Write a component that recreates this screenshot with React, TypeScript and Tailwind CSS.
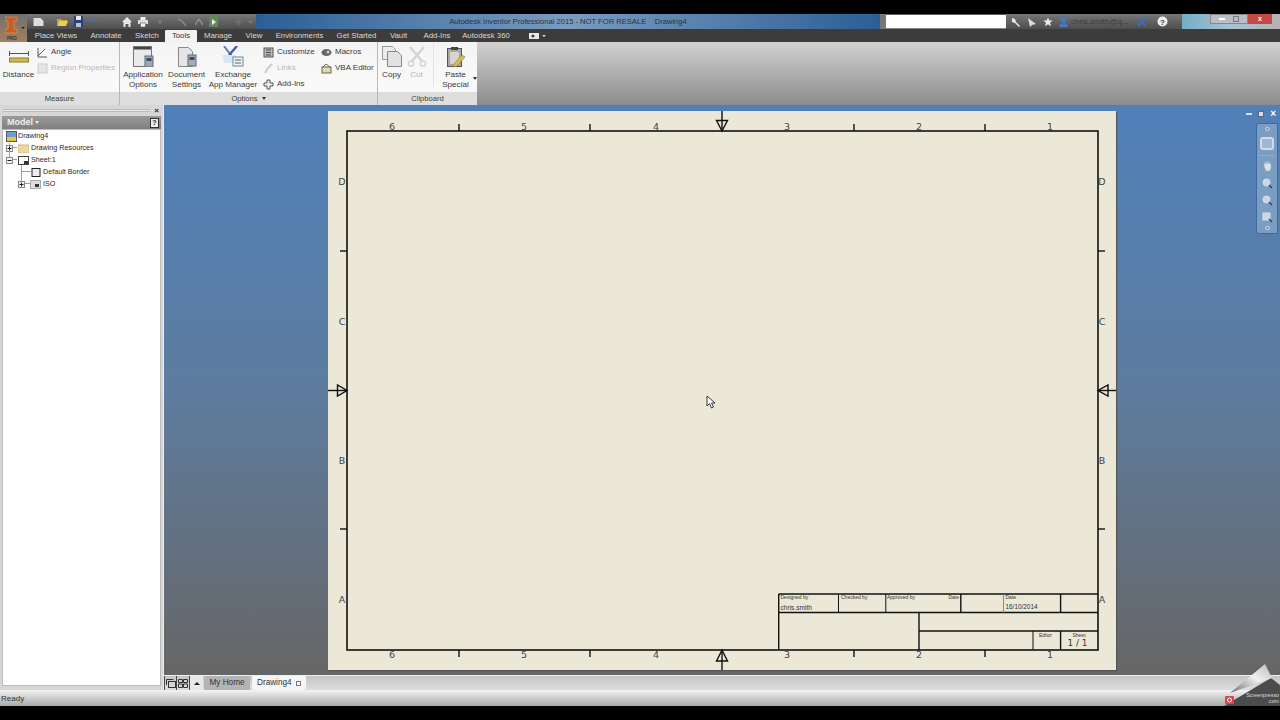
import React from "react";

const Ico = ({ w, h, children, className = "" }: { w: number; h: number; children: React.ReactNode; className?: string }) => (
  <svg width={w} height={h} viewBox={`0 0 ${w} ${h}`} className={`shrink-0 ${className}`}>{children}</svg>
);

const AppIcon = () => (
  <Ico w={22} h={21}>
    <rect x="1.500" y=".5" width="18" height="20" fill="#e9e9e9" stroke="#777" />
    <rect x="2" y="1" width="17" height="2.500" fill="#444" />
    <rect x="13" y="10" width="8" height="11" fill="#9fa9b2" stroke="#667" />
    <rect x="14.500" y="12" width="5" height="3" fill="#34506e" />
  </Ico>
);
const DocIcon = () => (
  <Ico w={20} h={21}>
    <path d="M1.500 1.500h10l4 4v15h-14z" fill="#e5e5e5" stroke="#888" />
    <rect x="11" y="9" width="8" height="11" fill="#a5adb5" stroke="#667" />
    <rect x="12.500" y="11" width="5" height="3" fill="#34506e" />
  </Ico>
);
const ExchangeIcon = () => (
  <Ico w={22} h={21}>
    <path d="M2 0l6 8-5 8" stroke="#5a7fc0" strokeWidth="2" fill="none" />
    <path d="M15 0L8 8l6 8" stroke="#3f5fa5" strokeWidth="2.400" fill="none" />
    <path d="M0 9h13l4 8H2z" fill="#dbe6f2" />
    <rect x="11" y="11" width="10" height="9" fill="#eef2f5" stroke="#6a8a9a" />
    <path d="M13 14h6M13 17h6" stroke="#567" />
  </Ico>
);
const CopyIcon = () => (
  <Ico w={21} h={21}>
    <path d="M1.500 .5h10l3 3v10h-13z" fill="#ececec" stroke="#999" />
    <path d="M6.500 5.500h10l4 4v11h-14z" fill="#e2e2e2" stroke="#888" />
  </Ico>
);
const CutIcon = () => (
  <Ico w={20} h={21}>
    <path d="M3 1l12 14M17 1L5 15" stroke="#d4d4d4" strokeWidth="2.400" />
    <circle cx="4" cy="17.500" r="2.600" fill="none" stroke="#d4d4d4" strokeWidth="1.500" />
    <circle cx="16" cy="17.500" r="2.600" fill="none" stroke="#d4d4d4" strokeWidth="1.500" />
  </Ico>
);
const PasteIcon = () => (
  <Ico w={21} h={22}>
    <rect x="2.500" y="2.500" width="14" height="18" fill="#a8a8a0" stroke="#555" />
    <rect x="6" y="1" width="7" height="3" fill="#444" />
    <rect x="5" y="6" width="9" height="12" fill="#d5d5ce" />
    <path d="M9 18l8-9 3 2-8 9-4 1z" fill="#d8bd55" stroke="#8a7326" strokeWidth=".6" />
  </Ico>
);
const LargeBtn = ({ w, icon, lines, dim }: { w: number; icon: React.ReactNode; lines: string[]; dim?: boolean }) => (
  <div className="flex flex-col items-center shrink-0" style={{ width: w }}>
    <div className="h-[27px] flex items-start justify-center pt-[3px]">{icon}</div>
    <div className={`leading-[10px] text-center whitespace-nowrap text-[8.1px] ${dim ? "text-[#b5b5b5]" : "text-[#3a3a3a]"}`}>
      {lines.map((l) => <div key={l}>{l}</div>)}
    </div>
  </div>
);
const SmallBtn = ({ icon, label, dim }: { icon: React.ReactNode; label: string; dim?: boolean }) => (
  <div className={`flex items-center h-[16px] gap-[3px] whitespace-nowrap ${dim ? "text-[#b8b8b8]" : "text-[#3a3a3a]"}`}>
    {icon}<span>{label}</span>
  </div>
);
const Panel = ({ w, label, caret, children, last }: { w: number; label: string; caret?: boolean; children: React.ReactNode; last?: boolean }) => (
  <div className={`flex flex-col shrink-0 ${last ? "" : "border-r border-[#b9b9b9]"}`} style={{ width: w }}>
    <div className="h-[50px] flex bg-gradient-to-b from-[#f4f4f4] to-[#fafafa] pt-[1px]">{children}</div>
    <div className="h-[13px] flex items-center justify-center gap-[4px] bg-[#dedede] text-[#3f3f3f]">
      <span>{label}</span>
      {caret && <span className="w-0 h-0 border-x-[2.5px] border-x-transparent border-t-[3px] border-t-[#333]" />}
    </div>
  </div>
);

const tabs: [string, number][] = [["Place Views", 54], ["Annotate", 46], ["Sketch", 36], ["Tools", 32], ["Manage", 42], ["View", 30], ["Environments", 61], ["Get Started", 53], ["Vault", 31], ["Add-Ins", 46], ["Autodesk 360", 52]];

const qat = (
  <div className="flex items-center ml-[6px]">
    <Ico w={11} h={9}><path d="M.5 1h7l3 3v5h-10z" fill="#dedede" /></Ico>
    <div className="w-[13px]" />
    <Ico w={11} h={9}><path d="M0 2h4l1 1h5v1H3L1 9H0z" fill="#c9a52c" /><path d="M2 4h9L9 9H1z" fill="#e9cf58" /></Ico>
    <div className="w-[6px]" />
    <Ico w={9} h={11}><rect width="9" height="11" fill="#2c3f7e" /><rect x="2" y="0" width="5" height="4" fill="#e8e8e8" /><rect x="2" y="7" width="5" height="4" fill="#b8c0d8" /></Ico>
    <div className="w-[5px]" />
    <Ico w={12} h={9}><path d="M4 0L0 3l4 3V4c3 0 5 1 6 4 0-4-3-6-6-6z" fill="#4a6fa0" /></Ico>
    <div className="w-[22px]" />
    <Ico w={10} h={10}><path d="M5 0l5 5H8.500v5h-2V7h-3v3h-2V5H0z" fill="#e8e8e8" /></Ico>
    <div className="w-[6px]" />
    <Ico w={10} h={10}><rect x="2.500" y="0" width="5" height="3" fill="#eee" /><rect x="0" y="3" width="10" height="4" fill="#ddd" /><rect x="2.500" y="6" width="5" height="4" fill="#f2f2f2" stroke="#444" strokeWidth=".5" /></Ico>
    <div className="w-[9px]" />
    <Ico w={6} h={9}><circle cx="3" cy="5" r="2" fill="#787878" /></Ico>
    <div className="w-[14px]" />
    <Ico w={10} h={10}><path d="M1 2l4 2 4 5" stroke="#8a8a8a" fill="none" strokeWidth="1.500" /></Ico>
    <div className="w-[8px]" />
    <Ico w={8} h={10}><path d="M0 8l4-6 4 6" stroke="#8f8f8f" fill="none" strokeWidth="1.500" /></Ico>
    <div className="w-[6px]" />
    <Ico w={9} h={11}><rect width="9" height="11" fill="#5f8a55" /><path d="M3 3l4 3-4 3z" fill="#eee" /></Ico>
    <div className="w-[17px]" />
    <Ico w={7} h={8}><path d="M3.500 0v8M0 4h7" stroke="#777" /></Ico>
    <div className="w-[6px]" />
    <Ico w={5} h={8}><path d="M0 3h5L2.500 6z" fill="#777" /></Ico>
  </div>
);

const Sheet = () => {
  const ticksX = [459, 590, 854, 985];
  const ticksY = [251, 529];
  const topLabels: [string, number][] = [["6", 392], ["5", 524], ["4", 656], ["3", 787], ["2", 919], ["1", 1050]];
  const sideLabels: [string, number][] = [["D", 181], ["C", 321], ["B", 460], ["A", 599]];
  const L = (x1: number, y1: number, x2: number, y2: number, w = 1.4) => (
    <line x1={x1} y1={y1} x2={x2} y2={y2} stroke="#111" strokeWidth={w} />
  );
  const T = (s: string, x: number, y: number, size: number, anchor: "start" | "middle" | "end" = "start", fill = "#333", family = "'Liberation Sans',sans-serif") => (
    <text x={x} y={y} fontSize={size} textAnchor={anchor} fill={fill} fontFamily={family}>{s}</text>
  );
  const dj = "'DejaVu Sans',sans-serif";
  return (
    <svg width={788} height={559} viewBox="328 111 788 559" className="block bg-[#ebe8d8] shadow-[1px_1px_1px_#555]">
      <rect x="347" y="131" width="751" height="519" fill="none" stroke="#111" strokeWidth="1.6" />
      {ticksX.map((x) => <g key={x}>{L(x, 124, x, 131)}{L(x, 650, x, 657)}</g>)}
      {ticksY.map((y) => <g key={y}>{L(340, y, 347, y)}{L(1098, y, 1105, y)}</g>)}
      {topLabels.map(([s, x]) => <g key={s}>{T(s, x, 130, 9.5, "middle", "#444", dj)}{T(s, x, 658, 9.5, "middle", "#444", dj)}</g>)}
      {sideLabels.map(([s, y]) => <g key={s}>{T(s, 342, y + 4, 9.5, "middle", "#444", dj)}{T(s, 1102, y + 4, 9.5, "middle", "#444", dj)}</g>)}
      {L(722, 111, 722, 131)}<path d="M716.500 120.500h11L722 131z" fill="none" stroke="#111" strokeWidth="1.400" />
      {L(722, 650, 722, 670)}<path d="M716.500 661h11L722 650z" fill="none" stroke="#111" strokeWidth="1.400" />
      {L(328, 390.5, 347, 390.5)}<path d="M337.500 385v11L347 390.500z" fill="none" stroke="#111" strokeWidth="1.400" />
      {L(1098, 390.5, 1116, 390.5)}<path d="M1108 385v11L1098 390.500z" fill="none" stroke="#111" strokeWidth="1.400" />
      {L(778.7, 594, 1098, 594)}{L(778.7, 594, 778.7, 650)}{L(778.7, 612.5, 1098, 612.5)}
      {L(838.5, 594, 838.5, 612.5, 1)}{L(885.8, 594, 885.8, 612.5, 1)}{L(960.8, 594, 960.8, 612.5)}
      <line x1="1003.5" y1="594" x2="1003.5" y2="612.5" stroke="#888" strokeWidth="1" />
      {L(1060.6, 594, 1060.6, 612.5)}{L(919, 612.5, 919, 650)}{L(919, 631, 1098, 631)}
      {L(1033, 631, 1033, 650, 1)}{L(1060.6, 631, 1060.6, 650)}
      {T("Designed by", 780.5, 599, 5)}{T("chris.smith", 780.5, 610, 6.6)}
      {T("Checked by", 841, 599, 5)}{T("Approved by", 887, 599, 5)}{T("Date", 959, 599, 5, "end")}
      {T("Date", 1005.5, 599, 5)}{T("16/10/2014", 1005.5, 609, 6.4)}
      {T("Editor", 1045.5, 637, 5, "middle")}{T("Sheet", 1079, 637, 5, "middle")}
      {T("1 / 1", 1077.5, 646, 8.8, "middle", "#333", dj)}
    </svg>
  );
};

const treeRow = "flex items-center h-[12px] whitespace-nowrap text-[#2a2a2a]";
const PlusBox = ({ minus }: { minus?: boolean }) => (
  <Ico w={7} h={7}><rect x=".5" y=".5" width="6" height="6" fill="#f2f2f2" stroke="#888" /><path d={minus ? "M1.500 3.500h4" : "M1.500 3.500h4M3.500 1.500v4"} stroke="#222" /></Ico>
);

export default function App() {
  return (
    <div className="w-[1280px] h-[720px] relative overflow-hidden bg-black flex flex-col text-[7.6px] font-['Liberation_Sans',sans-serif]">
      <div className="h-[14px] shrink-0" />
      {/* title bar */}
      <div className="h-[15px] shrink-0 flex bg-[#2a6299] relative">
        <div className="w-[27px]" />
        <div className="w-[229px] bg-gradient-to-b from-[#787878] to-[#4e4e4e] flex items-center">{qat}</div>
        <div className="w-[624px] bg-gradient-to-r from-[#2a5f96] via-[#7b9bbd] to-[#2a5f96] flex items-center justify-center text-[#27333f] text-[7.6px] whitespace-pre">
          Autodesk Inventor Professional 2015 - NOT FOR RESALE    Drawing4
        </div>
        <div className="w-[6px] bg-[#777]" />
        <div className="w-[147px] shrink-0 bg-[#5e5e5e] flex items-end"><div className="w-[120px] h-[14px] bg-white border-b border-[#888]" /></div>
        <div className="w-[176px] -ml-[27px] bg-gradient-to-b from-[#777] to-[#4e4e4e] flex items-center pl-[5px] gap-[6px] text-[#3c3c3c] whitespace-nowrap">
          <Ico w={10} h={10}><path d="M1 1l3 1 1 3 4 4-1 1-4-4-3-1z" fill="#e8e8e8" /></Ico>
          <Ico w={10} h={10}><path d="M1 1l8 6-4 1-2 2z" fill="#ddd" /></Ico>
          <Ico w={10} h={10}><path d="M5 .5l1.300 3H9.600L7 5.800l1 3.500-3-2-3 2 1-3.500L.4 3.500h3.300z" fill="#eee" /></Ico>
          <Ico w={9} h={11}><circle cx="4.500" cy="3.500" r="3" fill="#4a77c0" /><path d="M0 11c0-3 2-4 4.500-4S9 8 9 11z" fill="#4a77c0" /></Ico>
          <span className="-ml-[3px] text-[8px]">chris.smith@q...</span>
          <Ico w={10} h={10} className="ml-[3px]"><path d="M1 1l4 4-4 4M9 1L5 5l4 4" stroke="#3a6db5" strokeWidth="2" fill="none" /></Ico>
          <Ico w={11} h={11} className="ml-[4px]"><circle cx="5.500" cy="5.500" r="5" fill="#eee" /><text x="5.5" y="8.5" fontSize="8" fontWeight="700" textAnchor="middle" fill="#345">?</text></Ico>
        </div>
        <div className="flex-1 bg-gradient-to-r from-[#73aec4] via-[#a8c3d2] to-[#b9b0b0] flex justify-end items-start">
          <div className="w-[38px] h-[10px] bg-[#b9bec5] border border-[#888] flex items-center justify-center gap-[8px]">
            <div className="w-[6px] h-[2px] bg-white" />
            <div className="w-[6px] h-[6px] border border-[#778]" />
          </div>
          <div className="w-[24px] h-[10px] bg-[#c54a44] text-white flex items-center justify-center text-[7px] font-bold">x</div>
          <div className="w-[8px]" />
        </div>
      </div>
      {/* tab bar */}
      <div className="h-[13px] shrink-0 bg-[#3c3c3c] flex items-stretch pl-[29px] text-[#d8d8d8] text-[7.8px]">
        {tabs.map(([t, w]) => (
          <div key={t} style={{ width: w }} className={`flex items-center justify-center whitespace-nowrap ${t === "Tools" ? "bg-[#f2f2f2] text-[#333] rounded-t-[1px] mt-[1px]" : ""}`}>{t}</div>
        ))}
        <div className="ml-[16px] flex items-center gap-[3px]">
          <Ico w={11} h={8}><rect x="1" y="1" width="10" height="6" fill="#e8e8e8" /><circle cx="5" cy="4" r="1.600" fill="#444" /></Ico>
          <span className="w-0 h-0 border-x-[2px] border-x-transparent border-t-[2.5px] border-t-[#ddd]" />
        </div>
      </div>
      {/* ribbon */}
      <div className="h-[63px] shrink-0 flex bg-gradient-to-b from-[#d2d2d2] to-[#8c8c8c]">
        <Panel w={120} label="Measure">
          <LargeBtn w={37} lines={["Distance"]} icon={
            <Ico w={20} h={13} className="mt-[4px]"><path d="M0 3.500h20M.5 1v5M19.500 1v5" stroke="#555" /><rect x=".5" y="8" width="19" height="4" fill="#d6b84e" stroke="#8b7a33" /></Ico>
          } />
          <div className="pt-[1px] text-[8px]">
            <SmallBtn label="Angle" icon={<Ico w={11} h={11}><path d="M1 1v9h9M1 9l7-7" stroke="#556" fill="none" /></Ico>} />
            <SmallBtn dim label="Region Properties" icon={<Ico w={11} h={11}><rect x="1" y="1" width="9" height="9" fill="#e4e4e4" stroke="#ccc" /></Ico>} />
          </div>
        </Panel>
        <Panel w={258} label="Options" caret>
          <LargeBtn w={46} lines={["Application", "Options"]} icon={<AppIcon />} />
          <LargeBtn w={41} lines={["Document", "Settings"]} icon={<DocIcon />} />
          <LargeBtn w={52} lines={["Exchange", "App Manager"]} icon={<ExchangeIcon />} />
          <div className="ml-[4px] w-[58px] pt-[1px] text-[8px]">
            <SmallBtn label="Customize" icon={<Ico w={11} h={11}><rect x="1" y="1" width="9" height="9" fill="#bbb" stroke="#555" /><path d="M3 3h5M3 5.500h5M3 8h5" stroke="#444" /></Ico>} />
            <SmallBtn dim label="Links" icon={<Ico w={11} h={11}><path d="M2 10l3-5 4-4" stroke="#ccc" strokeWidth="2" fill="none" /></Ico>} />
            <SmallBtn label="Add-Ins" icon={<Ico w={11} h={11}><path d="M4 1h3v3h3v3H7v3H4V7H1V4h3z" fill="#eee" stroke="#555" /></Ico>} />
          </div>
          <div className="pt-[1px] text-[8px]">
            <SmallBtn label="Macros" icon={<Ico w={11} h={11}><ellipse cx="5.500" cy="5.500" rx="5" ry="3.500" fill="#666" /><circle cx="7" cy="5" r="1.500" fill="#ccc" /></Ico>} />
            <SmallBtn label="VBA Editor" icon={<Ico w={11} h={11}><rect x="1" y="4" width="9" height="6" fill="#e0d9b0" stroke="#665" /><path d="M2 4l3-3 4 3" fill="none" stroke="#665" /></Ico>} />
          </div>
        </Panel>
        <Panel w={99} label="Clipboard" last>
          <div className="w-[1px]" />
          <LargeBtn w={25} lines={["Copy"]} icon={<CopyIcon />} />
          <LargeBtn w={25} dim lines={["Cut"]} icon={<CutIcon />} />
          <div className="w-[1px] h-[44px] ml-[4px] bg-[#e4e4e4]" />
          <div className="relative">
            <LargeBtn w={43} lines={["Paste", "Special"]} icon={<PasteIcon />} />
            <span className="absolute right-[0px] top-[34px] w-0 h-0 border-x-[2px] border-x-transparent border-t-[3px] border-t-[#333]" />
          </div>
        </Panel>
      </div>
      {/* main */}
      <div className="flex-1 flex min-h-0">
        <div className="w-[164px] shrink-0 bg-[#d6d6d6] flex flex-col px-[2px] pb-[4px] border-r border-[#eee]">
          <div className="h-[11px] flex items-center gap-[4px] pl-[1px]">
            <div className="h-[3px] flex-1 bg-[#e8e8e8] border-y border-[#bbb]" />
            <span className="text-[8px] font-bold leading-none text-[#222] pr-[2px]">×</span>
          </div>
          <div className="h-[13px] shrink-0 bg-gradient-to-b from-[#9a9a9a] to-[#808080] flex items-center pl-[5px] pr-[2px] text-[#eee] font-bold text-[9px]">
            <span>Model</span>
            <span className="ml-[2px] w-0 h-0 border-x-[2.5px] border-x-transparent border-t-[3px] border-t-[#eee]" />
            <div className="ml-auto w-[9px] h-[10px] bg-[#eee] border border-[#333] text-[#222] text-[7px] leading-[8px] text-center">?</div>
          </div>
          <div className="flex-1 bg-white border border-[#bcbcbc] text-[7.2px] relative">
            <svg className="absolute left-0 top-0" width="40" height="60" viewBox="0 0 40 60">
              <path d="M6.500 13v21M10 17.500h4M10 29.500h4M18.500 35v18M19 41.500h9M22 53.500h6" stroke="#888" fill="none" strokeWidth=".8" />
            </svg>
            <div className={`${treeRow} pl-[3px] gap-[1px]`}>
              <Ico w={11} h={11}><rect x=".5" y=".5" width="10" height="10" fill="#6aa0c8" stroke="#557" /><rect x="1" y="6" width="9" height="4" fill="#e8c93a" /></Ico>
              <span>Drawing4</span>
            </div>
            <div className={`${treeRow} pl-[3px] relative`}>
              <PlusBox />
              <Ico w={11} h={9} className="ml-[5px]"><rect y="1" width="11" height="8" fill="#ecd9a0" stroke="#d0b878" /></Ico>
              <span className="ml-[2px]">Drawing Resources</span>
            </div>
            <div className={`${treeRow} pl-[3px] relative`}>
              <PlusBox minus />
              <Ico w={11} h={9} className="ml-[5px]"><rect x=".5" y=".5" width="10" height="8" fill="#fff" stroke="#444" /><rect x="6" y="5" width="4" height="3" fill="#333" /></Ico>
              <span className="ml-[2px]">Sheet:1</span>
            </div>
            <div className={`${treeRow} pl-[28px] gap-[2px]`}>
              <Ico w={10} h={9}><rect x="1" y=".5" width="8" height="8" fill="#eee" stroke="#222" /></Ico>
              <span>Default Border</span>
            </div>
            <div className={`${treeRow} pl-[15px] relative`}>
              <PlusBox />
              <Ico w={11} h={9} className="ml-[5px]"><rect x=".5" y=".5" width="10" height="8" fill="#ddd" stroke="#aaa" /><rect x="5" y="4" width="4" height="3" fill="#333" /></Ico>
              <span className="ml-[2px]">ISO</span>
            </div>
          </div>
        </div>
        <div className="flex-1 flex flex-col min-w-0">
          <div className="flex-1 relative bg-gradient-to-b from-[#4f80b9] via-[#5d7c9f] to-[#666666] pl-[164px] pt-[6px]">
            <Sheet />
            <div className="absolute right-[4px] top-[4px] flex items-center gap-[6px]">
              <div className="w-[6px] h-[2px] bg-[#dde]" />
              <div className="w-[6px] h-[6px] bg-[#ddd] border border-[#667]" />
              <span className="text-[10px] leading-none font-bold text-white">×</span>
            </div>
            <div className="absolute left-[1092px] top-[18px] w-[22px] h-[111px] bg-[#7c9dc2] border border-[#3f6a9c] rounded-l-[3px] flex flex-col items-center pt-[3px] gap-[3px]">
              <div className="w-[5px] h-[5px] rounded-full border border-[#ccd]" />
              <div className="w-[14px] h-[14px] mt-[3px] rounded-[3px] border-2 border-[#d0dae6] bg-[#9fb6d0]" />
              <div className="w-[16px] h-[1px] bg-[#9ab] mt-[2px]" />
              <Ico w={11} h={12} className="mt-[1px]"><path d="M2 6V2.500l1.500 2V1l1.500 3V.5L7 4V1.500L9 5v3l-1.500 3H4z" fill="#d8e2ec" stroke="#aab" strokeWidth=".5" /></Ico>
              <Ico w={11} h={11} className="mt-[3px]"><circle cx="4.500" cy="4.500" r="3.500" fill="#c8d5e4" stroke="#dde" /><path d="M7 7l3 3" stroke="#345" strokeWidth="1.500" /></Ico>
              <Ico w={11} h={11} className="mt-[3px]"><circle cx="4.500" cy="4.500" r="3.500" fill="#c8d5e4" stroke="#dde" /><path d="M7 7l3 3" stroke="#345" strokeWidth="1.500" /></Ico>
              <Ico w={11} h={11} className="mt-[3px]"><rect x="1" y="1" width="7" height="7" fill="#c8d5e4" stroke="#dde" /><path d="M7 7l3 3" stroke="#345" strokeWidth="1.500" /></Ico>
              <div className="w-[5px] h-[5px] rounded-full border border-[#ccd] mt-auto mb-[3px]" />
            </div>
            <svg className="absolute left-[542px] top-[290px]" width="10" height="14" viewBox="0 0 10 14">
              <path d="M1 1v10l2.500-2.500L5.500 13l2-1-2-4H9z" fill="#fff" stroke="#222" strokeWidth=".9" />
            </svg>
          </div>
          <div className="h-[15px] shrink-0 bg-gradient-to-b from-[#c4c4c4] to-[#dedede] flex items-stretch border-t border-[#eee]">
            <div className="w-[13px] flex items-center justify-center border-x border-[#444]"><Ico w={10} h={9}><rect x="2.500" y="2.500" width="7" height="6" fill="none" stroke="#333" /><path d="M.5 6V.5h7" fill="none" stroke="#333" /></Ico></div>
            <div className="w-[13px] flex items-center justify-center border-r border-[#444]"><Ico w={10} h={9}><path d="M.5.5h4v3h-4zM5.500.5h4v3h-4zM.5 5h4v3.500h-4zM5.500 5h4v3.500h-4z" fill="none" stroke="#333" /></Ico></div>
            <div className="w-[13px] flex items-center justify-center bg-[#e8e8e8]"><span className="w-0 h-0 border-x-[3px] border-x-transparent border-b-[3px] border-b-[#222]" /></div>
            <div className="w-[46px] ml-[1px] bg-[#b4b4b4] rounded-t-[3px] flex items-center justify-center text-[#333] text-[8.2px]">My Home</div>
            <div className="w-[54px] ml-[2px] bg-[#f6f6f6] rounded-b-[3px] flex items-center pl-[5px] gap-[4px] text-[#333] text-[8.2px]">
              <span>Drawing4</span>
              <Ico w={5} h={5}><rect x=".5" y=".5" width="4" height="4" fill="none" stroke="#777" /></Ico>
            </div>
          </div>
        </div>
      </div>
      {/* status */}
      <div className="h-[16px] shrink-0 bg-gradient-to-b from-[#f4f4f4] to-[#a9a9a9] flex items-center pl-[1px] pt-[1px] text-[#333] text-[8px]">Ready</div>
      <div className="h-[14px] shrink-0" />
      {/* screenpresso badge */}
      <svg className="absolute left-[1222px] top-[660px]" width={58} height={48} viewBox="0 0 58 48">
        <defs>
          <linearGradient id="curl" x1="0" y1="1" x2="1" y2="0">
            <stop offset="0" stopColor="#6a6a6a" /><stop offset="0.55" stopColor="#f0f0f0" /><stop offset="1" stopColor="#bbb" />
          </linearGradient>
        </defs>
        <path d="M2 46L49 18l9 7v21z" fill="#4c4c4c" />
        <path d="M8 33L43 4l7 14z" fill="url(#curl)" />
        <rect x="3" y="36" width="9" height="8" rx="1" fill="#d9454a" />
        <circle cx="7.500" cy="40" r="2" fill="none" stroke="#fff" strokeWidth="1" />
        <text x="57" y="37" textAnchor="end" fontSize="5.300" fill="#ddd" fontFamily="'Liberation Sans',sans-serif">Screenpresso</text>
        <text x="57" y="43" textAnchor="end" fontSize="5.300" fill="#ddd" fontFamily="'Liberation Sans',sans-serif">.com</text>
      </svg>
      {/* application logo */}
      <div className="absolute left-0 top-[14px] w-[27px] h-[28px] bg-gradient-to-b from-[#6f6f6f] to-[#a2805f] flex flex-col items-start pl-[5px]">
        <svg width="20" height="20" viewBox="0 0 20 20" className="mt-[2px]">
          <path d="M0 1h12v4H9v8h3v4H0v-4h3V5H0z" fill="#c75f25" stroke="#e29a5a" strokeWidth=".6" />
          <path d="M16 11h4l-2 2z" fill="#222" />
        </svg>
        <span className="text-[4.5px] leading-[5px] font-bold text-[#333] ml-[2px]">PRO</span>
      </div>
    </div>
  );
}
